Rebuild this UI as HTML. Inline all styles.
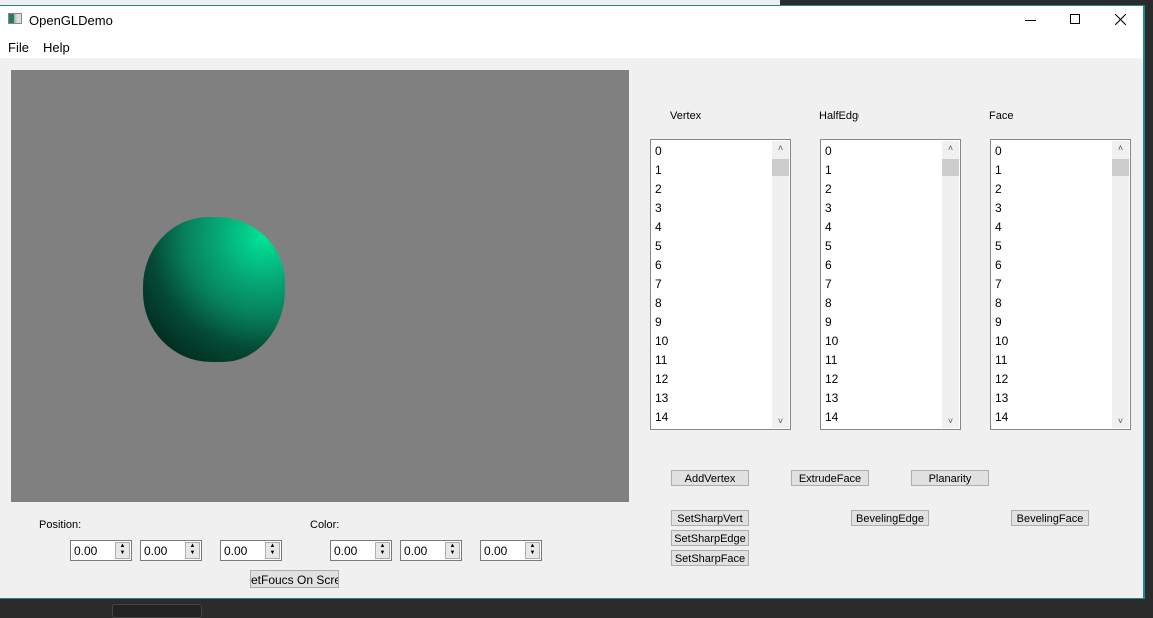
<!DOCTYPE html><html><head><style>
body{margin:0;width:1153px;height:613px;background:#2b2b2b;position:relative;overflow:hidden;font-family:"Liberation Sans",sans-serif;font-size:12px;color:#000}
.a{position:absolute}
.btn{position:absolute;background:#e1e1e1;border:1px solid #adadad;box-sizing:border-box;text-align:center;font-size:11px;line-height:16px;height:16px;width:78px;overflow:hidden;white-space:nowrap}
.list{position:absolute;background:#fff;border:1px solid #828790;box-sizing:border-box;width:141px;height:291px;top:139px}
.list .it{position:absolute;left:4px;font-size:12px}
.sb{position:absolute;right:1px;top:1px;width:17px;bottom:1px;background:#f0f0f0}
.th{position:absolute;left:0;width:17px;top:18px;height:17px;background:#cdcdcd}
.spin{position:absolute;top:540px;width:62px;height:21px;border:1px solid #7a7a7a;box-sizing:border-box;background:#fff}
.spin span{position:absolute;left:3px;top:3px;font-size:12px}
.spin i{position:absolute;right:1px;top:1px;width:15px;height:17px;background:#e8e8e8;border:1px solid #adadad;box-sizing:border-box;font-style:normal;font-size:6px;line-height:7px;text-align:center}
</style></head><body>
<div class="a" style="left:0;top:0;width:780px;height:5px;background:#efefef"></div>
<div class="a" style="left:0;top:5px;width:1145px;height:594px;background:#1c8a8a"></div>
<div class="a" style="left:0;top:6px;width:1143px;height:592px;background:#f0f0f0"></div>
<div class="a" style="left:0;top:6px;width:1143px;height:52px;background:#fff"></div>
<div class="a" style="left:8px;top:13px;width:14px;height:11px;border:1px solid #888;box-sizing:border-box;background:linear-gradient(90deg,#2a7a5a 40%,#9ab 40%,#ddd 70%)"></div>
<div class="a" style="left:29px;top:13px;font-size:13px">OpenGLDemo</div>
<div class="a" style="left:1025px;top:20px;width:11px;height:1px;background:#000"></div>
<div class="a" style="left:1070px;top:14px;width:10px;height:10px;border:1px solid #000;box-sizing:border-box"></div>
<svg class="a" style="left:1115px;top:14px" width="11" height="11"><path d="M0 0L11 11M11 0L0 11" stroke="#000" stroke-width="1.1"/></svg>
<div class="a" style="left:8px;top:40px;font-size:13px">File</div>
<div class="a" style="left:43px;top:40px;font-size:13px">Help</div>
<div class="a" style="left:11px;top:70px;width:618px;height:432px;background:#808080;overflow:hidden">
<div class="a" style="left:132px;top:147px;width:142px;height:145px;border-radius:46% 48% 44% 48%/48% 45% 50% 48%;background:radial-gradient(ellipse 150px 150px at 120px 20px,#00e496 0%,#05a876 30%,#07815c 52%,#044a34 75%,#022a1e 100%)"></div>
</div>
<div class="a" style="left:670px;top:110px;font-size:11px">Vertex</div>
<div class="a" style="left:819px;top:110px;font-size:11px;width:40px;overflow:hidden;white-space:nowrap">HalfEdge</div>
<div class="a" style="left:989px;top:110px;font-size:11px">Face</div>
<div class="list" style="left:650px" id="l1"></div>
<div class="list" style="left:820px" id="l2"></div>
<div class="list" style="left:990px" id="l3"></div>
<div class="btn" style="left:671px;top:470px">AddVertex</div>
<div class="btn" style="left:791px;top:470px">ExtrudeFace</div>
<div class="btn" style="left:911px;top:470px">Planarity</div>
<div class="btn" style="left:671px;top:510px">SetSharpVert</div>
<div class="btn" style="left:671px;top:530px">SetSharpEdge</div>
<div class="btn" style="left:671px;top:550px">SetSharpFace</div>
<div class="btn" style="left:851px;top:510px">BevelingEdge</div>
<div class="btn" style="left:1011px;top:510px">BevelingFace</div>
<div class="a" style="left:39px;top:519px;font-size:11px">Position:</div>
<div class="a" style="left:310px;top:519px;font-size:11px">Color:</div>
<div class="spin" style="left:70px"><span>0.00</span><i>▲<br>▼</i></div>
<div class="spin" style="left:140px"><span>0.00</span><i>▲<br>▼</i></div>
<div class="spin" style="left:220px"><span>0.00</span><i>▲<br>▼</i></div>
<div class="spin" style="left:330px"><span>0.00</span><i>▲<br>▼</i></div>
<div class="spin" style="left:400px"><span>0.00</span><i>▲<br>▼</i></div>
<div class="spin" style="left:480px"><span>0.00</span><i>▲<br>▼</i></div>
<div class="btn" style="left:250px;top:570px;width:89px;height:18px;line-height:18px;font-size:12px;text-align:right;padding-right:1px">etFoucs On Scree</div>
<div class="a" style="left:112px;top:604px;width:88px;height:12px;border:1px solid #444;border-radius:3px;background:#222"></div>
<script>
['l1','l2','l3'].forEach(function(id){var l=document.getElementById(id);var h='';for(var i=0;i<15;i++)h+='<div class="it" style="top:'+(4+i*19)+'px">'+i+'</div>';h+='<div class="sb"><div class="th"></div><div style="position:absolute;top:2px;width:17px;text-align:center;font-size:9px;color:#555">&#x2C4;</div><div style="position:absolute;bottom:2px;width:17px;text-align:center;font-size:9px;color:#555">&#x2C5;</div></div>';l.innerHTML=h;});
</script>
</body></html>
